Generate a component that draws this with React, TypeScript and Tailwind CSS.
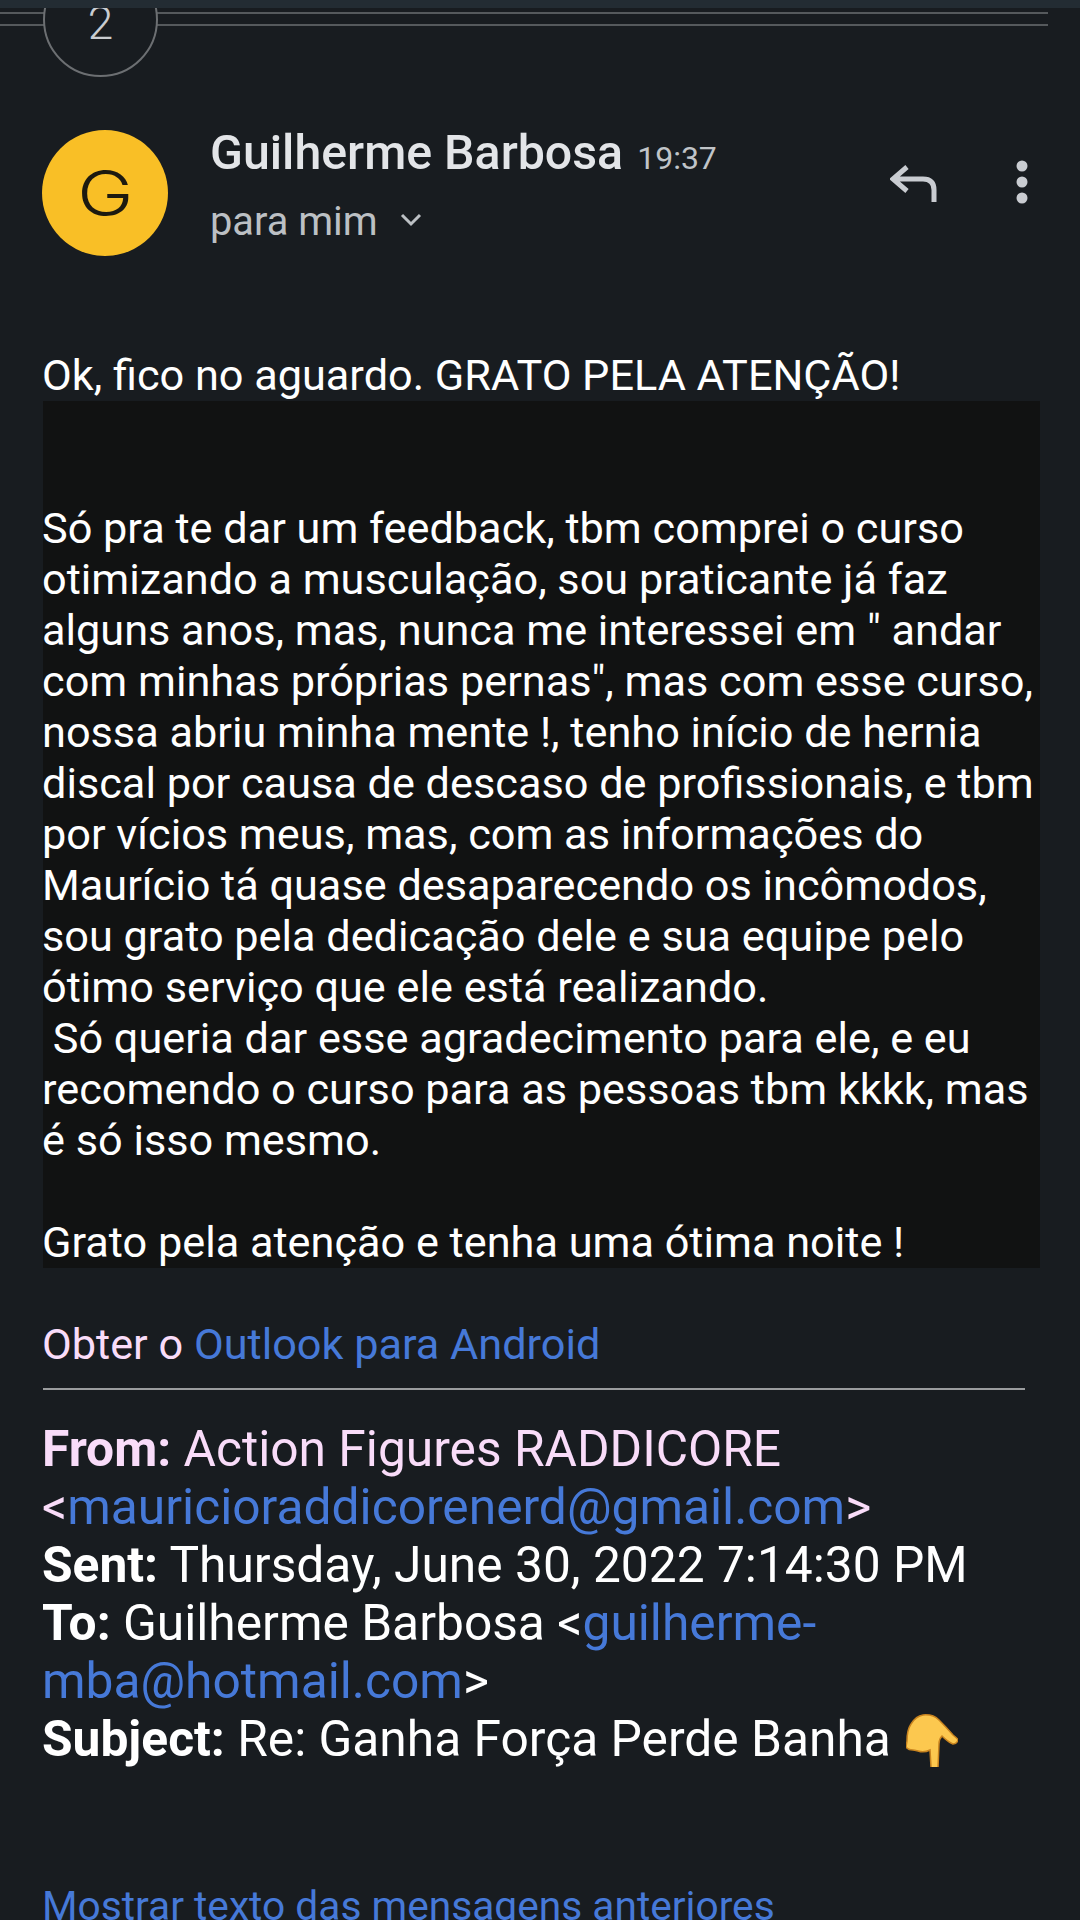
export default function App() {
  const link = "text-[#4679d8]";
  return (
    <div className="relative h-[1920px] w-[1080px] overflow-hidden bg-[#181c20] font-['Roboto',sans-serif] text-white">
      {/* thread count stub + stacked message edges */}
      <div className="relative z-10 h-[8px] bg-[#232c33]" />
      <div className="mr-[32px] mt-[4px] h-[14px] border-y-2 border-[#55595c]" />
      <div className="absolute left-[43px] top-[-38px] flex h-[115px] w-[115px] items-end justify-center rounded-full border-2 border-[#6c6f72] bg-[#181c20] pb-[27px] text-[46px] font-light leading-[50px] text-[#c9ccd0]">
        2
      </div>

      {/* sender header */}
      <div className="ml-[42px] mt-[104px] flex">
        <div className="flex h-[126px] w-[126px] shrink-0 items-center justify-center rounded-full bg-[#f9bf26] font-['Inter',sans-serif] text-[63px] font-light text-[#1d1a10]">
          <span className="scale-x-[1.2]">G</span>
        </div>
        <div className="ml-[42px] flex-1">
          <div className="-mt-[5px] flex items-baseline leading-[56px]">
            <span className="text-[48.3px] font-medium text-[#e3e5e8]">Guilherme Barbosa</span>
            <span className="ml-[14px] text-[32px] text-[#c0c4c8]">19:37</span>
          </div>
          <div className="mt-[13px] flex items-center text-[39.8px] leading-[46px] text-[#bcc0c4]">
            para mim
            <svg className="ml-[22px] mt-[-4px]" width="22" height="14" viewBox="0 0 22 14" fill="none" stroke="#bcc0c4" strokeWidth="3">
              <path d="M2 2l9 9 9-9" />
            </svg>
          </div>
        </div>
        <div className="mr-[52px] mt-[35px] flex h-[37px] items-start">
          <svg width="47" height="37" viewBox="0 0 47 37" fill="none" stroke="#c9ccd1" strokeWidth="5">
            <path d="M17 2L3 14l14 12M3 14h30q11 0 11 11v12" />
          </svg>
          <svg className="ml-[79px] mt-[-5px]" width="12" height="44" viewBox="0 0 12 44" fill="#c9ccd1">
            <circle cx="6" cy="6" r="5.5" />
            <circle cx="6" cy="22" r="5.5" />
            <circle cx="6" cy="38" r="5.5" />
          </svg>
        </div>
      </div>

      {/* message body */}
      <div className="mt-[94px] px-[42px] text-[43.25px] leading-[51px]">
        <div>Ok, fico no aguardo. GRATO PELA ATENÇÃO!</div>
        <div className="ml-[1px] mr-[-2px] bg-[#111212] pt-[102px]">
          <div className="-ml-[1px] whitespace-pre">
            {`Só pra te dar um feedback, tbm comprei o curso
otimizando a musculação, sou praticante já faz
alguns anos, mas, nunca me interessei em " andar
com minhas próprias pernas", mas com esse curso,
nossa abriu minha mente !, tenho início de hernia
discal por causa de descaso de profissionais, e tbm
por vícios meus, mas, com as informações do
Maurício tá quase desaparecendo os incômodos,
sou grato pela dedicação dele e sua equipe pelo
ótimo serviço que ele está realizando.
 Só queria dar esse agradecimento para ele, e eu
recomendo o curso para as pessoas tbm kkkk, mas
é só isso mesmo.

Grato pela atenção e tenha uma ótima noite !`}
          </div>
        </div>
        <div className="mt-[51px] text-[#f9dcf9]">
          Obter o <span className={link}>Outlook para Android</span>
        </div>
        <div className="ml-[1px] mr-[13px] mt-[18px] h-[2px] bg-[#9a9c9e]" />
      </div>

      {/* quoted headers */}
      <div className="mt-[30px] px-[42px] text-[49.7px] leading-[58px]">
        <div className="text-[#f9dcf9]">
          <b className="font-bold">From:</b> Action Figures RADDICORE
        </div>
        <div className="text-[#f9dcf9]">
          &lt;<span className={link}>mauricioraddicorenerd@gmail.com</span>&gt;
        </div>
        <div>
          <b className="font-bold">Sent:</b> Thursday, June 30, 2022 7:14:30 PM
        </div>
        <div>
          <b className="font-bold">To:</b> Guilherme Barbosa &lt;<span className={link}>guilherme-</span>
        </div>
        <div>
          <span className={link}>mba@hotmail.com</span>&gt;
        </div>
        <div className="flex h-[58px] items-center">
          <span className="whitespace-pre">
            <b className="font-bold">Subject:</b> Re: Ganha Força Perde Banha{" "}
          </span>
          <svg className="ml-[3px] mt-[3px]" width="52" height="53" viewBox="0 0 52 53">
            <path
              d="M1 27Q1 16 5 10 10 2 17 1 27 0 33 6q8 8 14 15 5 4 5 5-1 4-5 4-5-2-11-8-3 3-3 8l-1 24q-1 4-4 4-3-1-3-5l-1-17q-6 3-12 1-4-1-5-1-5 0-7-3z"
              fill="#fcc84f"
              stroke="#c9841f"
              strokeWidth="1.5"
            />
          </svg>
        </div>
      </div>

      <div className={`mt-[113px] px-[42px] text-[40.7px] leading-[51px] ${link}`}>
        Mostrar texto das mensagens anteriores
      </div>
    </div>
  );
}
